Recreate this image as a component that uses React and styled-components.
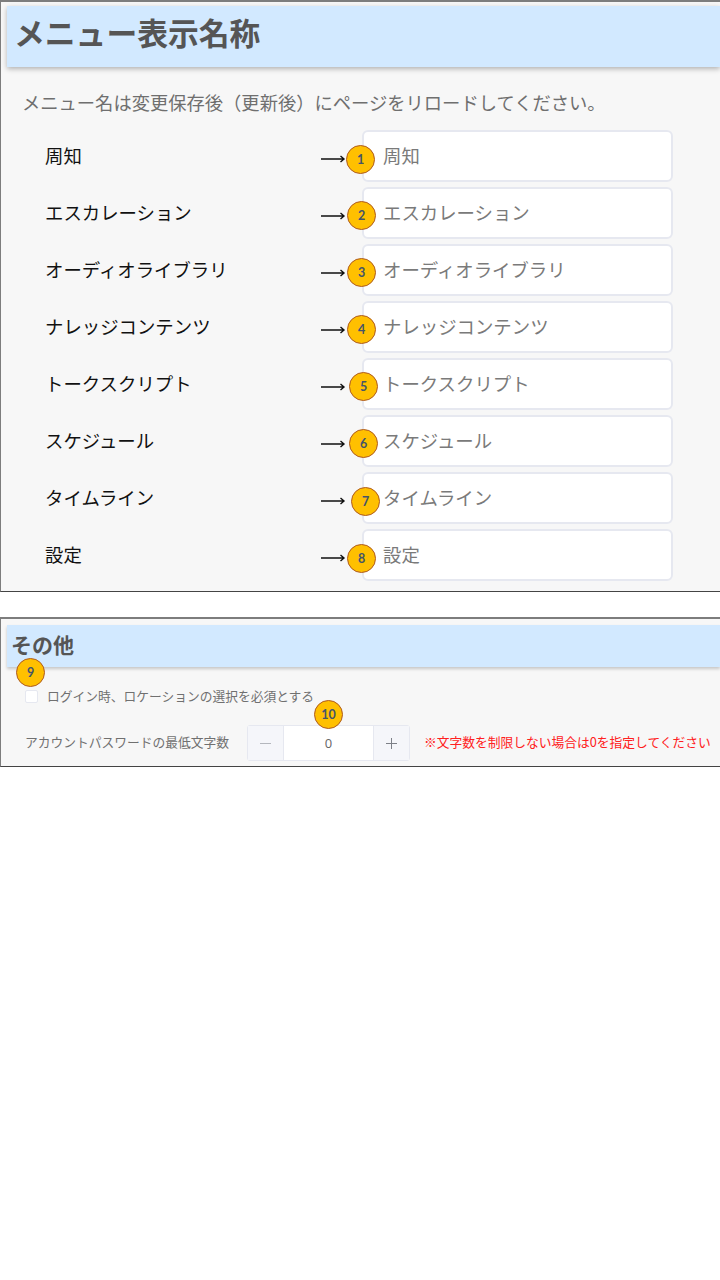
import React from 'react';
import styled, { createGlobalStyle } from 'styled-components';

const GlobalStyle = createGlobalStyle`
  html, body {
    margin: 0;
    padding: 0;
    background: #fff;
  }
  body {
    font-family: "Noto Sans CJK JP", "Noto Sans", sans-serif;
  }
`;

const menuItems = [
  { name: '周知', badgeLeft: -16, badgeTop: 15 },
  { name: 'エスカレーション', badgeLeft: -15, badgeTop: 14 },
  { name: 'オーディオライブラリ', badgeLeft: -15, badgeTop: 14 },
  { name: 'ナレッジコンテンツ', badgeLeft: -15, badgeTop: 14 },
  { name: 'トークスクリプト', badgeLeft: -13, badgeTop: 14 },
  { name: 'スケジュール', badgeLeft: -13, badgeTop: 14 },
  { name: 'タイムライン', badgeLeft: -11, badgeTop: 15 },
  { name: '設定', badgeLeft: -15, badgeTop: 15 },
];

export default function App() {
  return (
    <>
      <GlobalStyle />
      <MenuPanel>
        <Header>
          <Title>メニュー表示名称</Title>
        </Header>
        <Note>メニュー名は変更保存後（更新後）にページをリロードしてください。</Note>
        <Rows>
          {menuItems.map((item, i) => (
            <Row key={item.name}>
              <RowLabel>{item.name}</RowLabel>
              <Arrow>
                <svg width="25" height="10" viewBox="0 0 25 10">
                  <path d="M0 5H23M19.5 2L23 5L19.5 8" fill="none" stroke="#111" strokeWidth="1.4" />
                </svg>
              </Arrow>
              <NameField>
                <NameInput placeholder={item.name} readOnly />
                <Badge $left={item.badgeLeft} $top={item.badgeTop}>{i + 1}</Badge>
              </NameField>
            </Row>
          ))}
        </Rows>
      </MenuPanel>

      <OtherPanel>
        <SubHeader>
          <SubTitle>その他</SubTitle>
          <Badge $left={9} $top={33}>9</Badge>
        </SubHeader>
        <CheckRow>
          <CheckBox type="checkbox" readOnly />
          <SmallText>ログイン時、ロケーションの選択を必須とする</SmallText>
        </CheckRow>
        <PasswordRow>
          <PasswordLabel>アカウントパスワードの最低文字数</PasswordLabel>
          <Stepper>
            <StepButton>
              <svg width="11" height="11" viewBox="0 0 11 11">
                <path d="M0 5.5H11" stroke="#b4b7bd" strokeWidth="1" />
              </svg>
            </StepButton>
            <StepValue>0</StepValue>
            <StepButton>
              <svg width="11" height="11" viewBox="0 0 11 11">
                <path d="M0 5.5H11M5.5 0V11" stroke="#7d8087" strokeWidth="1" />
              </svg>
            </StepButton>
            <Badge $left={66} $top={-26}>10</Badge>
          </Stepper>
          <RedNote>※文字数を制限しない場合は0を指定してください</RedNote>
        </PasswordRow>
      </OtherPanel>
    </>
  );
}

const MenuPanel = styled.section`
  box-sizing: border-box;
  width: 720px;
  height: 592px;
  padding: 4px 0 0 6px;
  overflow: hidden;
  background: #f7f7f7;
  border-top: 2px solid #7d7d7d;
  border-left: 1px solid #7d7d7d;
  border-bottom: 1px solid #444;
`;

const Header = styled.header`
  display: flex;
  align-items: center;
  height: 61px;
  padding-left: 7px;
  background: #d2e9ff;
  box-shadow: 0 2px 5px rgba(0, 0, 0, 0.28);
`;

const Title = styled.h1`
  margin: 0 0 8px;
  font-size: 30.8px;
  font-weight: 700;
  line-height: 1.2;
  color: #555;
  white-space: nowrap;
`;

const Note = styled.p`
  margin: 22px 0 0 15px;
  font-size: 18.3px;
  line-height: 26px;
  color: #6f6f6f;
  white-space: nowrap;
`;

const Rows = styled.div`
  display: flex;
  flex-direction: column;
  gap: 5px;
  margin-top: 15px;
`;

const Row = styled.div`
  display: flex;
  align-items: center;
  height: 52px;
  padding-left: 38px;
`;

const RowLabel = styled.span`
  width: 276px;
  padding-bottom: 3px;
  font-size: 18.4px;
  color: #111;
  white-space: nowrap;
`;

const Arrow = styled.span`
  display: flex;
  width: 41px;
  padding-top: 5px;
`;

const NameField = styled.div`
  position: relative;
  width: 311px;
  height: 52px;
`;

const NameInput = styled.input`
  box-sizing: border-box;
  width: 100%;
  height: 100%;
  padding: 0 0 3px 19px;
  font-family: inherit;
  font-size: 18.4px;
  background: #fff;
  border: 2px solid #e6e8f0;
  border-radius: 6px;
  outline: none;

  &::placeholder {
    color: #7a7a7a;
    opacity: 1;
  }
`;

const Badge = styled.span`
  position: absolute;
  left: ${(p) => p.$left}px;
  top: ${(p) => p.$top}px;
  z-index: 1;
  box-sizing: border-box;
  display: flex;
  align-items: center;
  justify-content: center;
  width: 29px;
  height: 29px;
  font-family: Lato, sans-serif;
  font-size: 12.5px;
  font-weight: 700;
  color: #44546a;
  background: #ffc000;
  border: 1px solid #ae5a21;
  border-radius: 50%;
`;

const OtherPanel = styled.section`
  box-sizing: border-box;
  width: 720px;
  height: 150px;
  margin-top: 25px;
  padding: 6px 0 0 6px;
  overflow: hidden;
  background: #f7f7f7;
  border-top: 2px solid #7d7d7d;
  border-left: 1px solid #7d7d7d;
  border-bottom: 1px solid #444;
`;

const SubHeader = styled.header`
  position: relative;
  display: flex;
  align-items: center;
  height: 42px;
  padding-left: 4px;
  background: #d2e9ff;
  box-shadow: 0 2px 3px rgba(0, 0, 0, 0.2);
`;

const SubTitle = styled.h2`
  margin: 0 0 4px;
  font-size: 21px;
  font-weight: 700;
  color: #555;
`;

const CheckRow = styled.div`
  display: flex;
  align-items: center;
  gap: 9px;
  margin: 20px 0 0 18px;
  height: 18px;
`;

const CheckBox = styled.input`
  appearance: none;
  box-sizing: border-box;
  width: 13px;
  height: 13px;
  margin: 0;
  background: #fff;
  border: 1px solid #e6e8f0;
  border-radius: 2px;
`;

const SmallText = styled.span`
  margin-bottom: 2px;
  font-size: 12.75px;
  color: #707070;
  white-space: nowrap;
`;

const PasswordLabel = styled(SmallText)`
  margin-bottom: 4px;
`;

const PasswordRow = styled.div`
  display: flex;
  align-items: center;
  margin: 20px 0 0 18px;
  height: 36px;
`;

const Stepper = styled.div`
  position: relative;
  box-sizing: border-box;
  display: flex;
  width: 163px;
  height: 36px;
  margin-left: 18px;
  border: 1px solid #e6e8f0;
  border-radius: 3px;
`;

const StepButton = styled.span`
  display: flex;
  align-items: center;
  justify-content: center;
  width: 35px;
  background: #f5f6fa;
`;

const StepValue = styled.span`
  display: flex;
  flex: 1;
  align-items: center;
  justify-content: center;
  font-family: "Open Sans", sans-serif;
  font-size: 13px;
  color: #666;
  background: #fff;
  border-left: 1px solid #e6e8f0;
  border-right: 1px solid #e6e8f0;
`;

const RedNote = styled.span`
  margin: 0 0 4px 14px;
  font-size: 12.75px;
  color: #ff2020;
  white-space: nowrap;
`;
